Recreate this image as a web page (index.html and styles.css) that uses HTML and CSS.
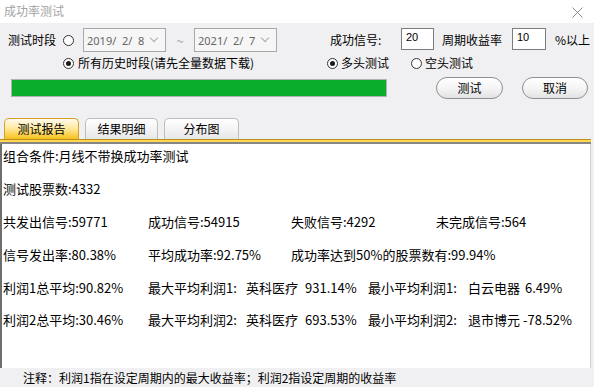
FILE: index.html
```html
<!DOCTYPE html>
<html lang="zh">
<head>
<meta charset="utf-8">
<title>成功率测试</title>
<link rel="stylesheet" href="styles.css">
</head>
<body>
<div class="window">
  <div class="titlebar">
    <span class="title">成功率测试</span>
    <svg class="close" width="11" height="11" viewBox="0 0 11 11"><path d="M0.5 0.5 L10.5 10.5 M10.5 0.5 L0.5 10.5" stroke="#8a8a8a" stroke-width="1" fill="none"/></svg>
  </div>

  <div class="row row1">
    <span class="lbl lbl-period">测试时段</span>
    <span class="radio radio-a"></span>
    <span class="datebox db1"><span class="dt">2019/  2/  8</span><span class="chev"></span></span>
    <span class="tilde">~</span>
    <span class="datebox db2"><span class="dt">2021/  2/  7</span><span class="chev"></span></span>
    <span class="lbl lbl-succ">成功信号:</span>
    <span class="num num1">20</span>
    <span class="lbl lbl-rate">周期收益率</span>
    <span class="num num2">10</span>
    <span class="lbl lbl-pct">%以上</span>
  </div>

  <div class="row row2">
    <span class="radio on radio-b"></span>
    <span class="lbl lbl-all">所有历史时段(请先全量数据下载)</span>
    <span class="radio on radio-c"></span>
    <span class="lbl lbl-long">多头测试</span>
    <span class="radio radio-d"></span>
    <span class="lbl lbl-short">空头测试</span>
  </div>

  <div class="row row3">
    <div class="progress"><div class="fill"></div></div>
    <button class="btn btn-test">测试</button>
    <button class="btn btn-cancel">取消</button>
  </div>

  <div class="tabs">
    <div class="tab active t1">测试报告</div>
    <div class="tab t2">结果明细</div>
    <div class="tab t3">分布图</div>
  </div>
  <div class="tabline"></div>

  <div class="report">
    <div class="line">组合条件:月线不带换成功率测试</div>
    <div class="line">测试股票数:4332</div>
    <div class="line">
      <span class="c1">共发出信号:59771</span><span class="c2">成功信号:54915</span><span class="c3">失败信号:4292</span><span>未完成信号:564</span>
    </div>
    <div class="line">
      <span class="c1">信号发出率:80.38%</span><span class="c2">平均成功率:92.75%</span><span>成功率达到50%的股票数有:99.94%</span>
    </div>
    <div class="line gap">
      <span class="c1">利润1总平均:90.82%</span><span class="p1">最大平均利润1:</span><span class="p2">英科医疗</span><span class="p3">931.14%</span><span class="p4">最小平均利润1:</span><span class="p5">白云电器</span><span class="p6">6.49%</span>
    </div>
    <div class="line">
      <span class="c1">利润2总平均:30.46%</span><span class="p1">最大平均利润2:</span><span class="p2">英科医疗</span><span class="p3">693.53%</span><span class="p4">最小平均利润2:</span><span class="p5">退市博元</span><span class="p6n">-78.52%</span>
    </div>
  </div>

  <div class="footer">注释：利润1指在设定周期内的最大收益率；利润2指设定周期的收益率</div>
</div>
</body>
</html>
```

FILE: styles.css
```css
* { box-sizing: border-box; }
html, body {
  margin: 0;
  padding: 0;
  width: 594px;
  height: 387px;
  overflow: hidden;
  background: #f0f0f2;
  font-family: "Noto Sans CJK SC", "Noto Sans", sans-serif;
  font-size: 12px;
  color: #000;
}
.window {
  width: 594px;
  height: 387px;
  display: flex;
  flex-direction: column;
}
.titlebar {
  height: 23px;
  background: #fff;
  display: flex;
  align-items: center;
  padding-left: 4px;
  flex-shrink: 0;
}
.title {
  color: #a3a3a3;
  font-size: 12px;
  line-height: 14px;
  margin-top: -1px;
}
.close {
  margin-left: auto;
  margin-right: 11px;
  margin-top: 2px;
}

.row {
  display: flex;
  align-items: center;
  flex-shrink: 0;
}
.lbl {
  white-space: nowrap;
  line-height: 16px;
}
.row1 {
  height: 24px;
  margin-top: 5px;
}
.lbl-period { margin-left: 8px; width: 55px; }
.radio {
  width: 11px;
  height: 11px;
  border: 1px solid #333;
  border-radius: 50%;
  background: #fff;
  position: relative;
  flex-shrink: 0;
}
.radio.on::after {
  content: "";
  position: absolute;
  left: 2px;
  top: 2px;
  width: 5px;
  height: 5px;
  border-radius: 50%;
  background: #1a1a1a;
}
.radio-a { margin-right: 9px; }
.datebox {
  width: 83px;
  height: 24px;
  border: 1px solid #a9a9a9;
  background: #f6f6f7;
  display: flex;
  align-items: center;
  padding-left: 3px;
  font-family: "Noto Sans", "Noto Sans CJK SC", sans-serif;
  color: #666;
  font-size: 11px;
}
.dt { white-space: pre; }
.chev {
  margin-left: auto;
  margin-right: 8px;
  width: 6px;
  height: 6px;
  border-right: 1px solid #aaa;
  border-bottom: 1px solid #aaa;
  transform: rotate(45deg);
  margin-top: -4px;
}
.tilde {
  width: 28px;
  text-align: center;
  color: #aaa;
  font-size: 13px;
}
.lbl-succ { margin-left: 53px; width: 71px; }
.num {
  height: 22px;
  border: 1px solid #7c7c7c;
  background: #fff;
  font-family: "Liberation Sans", sans-serif;
  font-size: 11px;
  line-height: 12px;
  padding: 2px 0 0 4px;
  align-self: flex-start;
}
.num1 { width: 33px; }
.lbl-rate { margin-left: 8px; width: 70px; }
.num2 { width: 34px; }
.lbl-pct { margin-left: 9px; }

.row2 {
  height: 16px;
  margin-top: 3px;
}
.radio-b { margin-left: 63px; }
.lbl-all { margin-left: 4px; width: 249px; }
.radio-c { margin-left: 0; }
.lbl-long { margin-left: 3px; width: 70px; }
.lbl-short { margin-left: 3px; }

.row3 {
  height: 22px;
  margin-top: 6px;
}
.progress {
  margin-left: 11px;
  width: 376px;
  height: 18px;
  border: 1px solid #b0b0b0;
  background: #e6e6e6;
}
.fill {
  width: 100%;
  height: 100%;
  background: #0aae2b;
}
.btn {
  height: 22px;
  border: 1px solid #8f8f8f;
  border-radius: 11px;
  background: linear-gradient(#ffffff, #f6f6f6 45%, #e3e3e3);
  font-family: "Noto Sans CJK SC", sans-serif;
  font-size: 12px;
  color: #000;
  padding: 0;
  line-height: 18px;
}
.btn-test { margin-left: 49px; width: 67px; }
.btn-cancel { margin-left: 19px; width: 66px; }

.tabs {
  display: flex;
  align-items: flex-end;
  height: 21px;
  margin-top: 19px;
  padding-left: 4px;
  gap: 6px;
  flex-shrink: 0;
}
.tab {
  height: 21px;
  border: 1px solid #bdbdbd;
  border-bottom: none;
  border-radius: 5px 5px 0 0;
  background: linear-gradient(#ffffff, #f4f4f4 50%, #e6e6e6);
  text-align: center;
  line-height: 20px;
  font-size: 12px;
}
.tab.active {
  border-color: #d7a22a;
  background: linear-gradient(#fffaf0, #ffeaa0 45%, #f6c11d);
}
.t1 { width: 75px; }
.t2 { width: 73px; }
.t3 { width: 75px; }
.tabline {
  width: 591px;
  height: 5px;
  border-top: 1px solid #b9901e;
  background: #ffd64e;
  border-bottom: 2px solid #868686;
  flex-shrink: 0;
}

.report {
  width: 591px;
  height: 224px;
  background: #fff;
  border-left: 2px solid #6e6e6e;
  border-right: 1px solid #d0d0d0;
  padding: 4px 0 0 1px;
  font-size: 13px;
  flex-shrink: 0;
}
.line {
  height: 16px;
  line-height: 16px;
  margin-bottom: 17px;
  white-space: nowrap;
  display: flex;
}
.line.gap { margin-top: 3px; margin-bottom: 16px; }
.line span { display: inline-block; }
.c1 { width: 145px; }
.c2 { width: 143px; }
.c3 { width: 145px; }
.p1 { width: 98px; }
.p2 { width: 59px; }
.p3 { width: 63px; }
.p4 { width: 100px; }
.p5 { width: 54px; }
.p6 { margin-left: 3px; }
.p6n { margin-left: 1px; }

.footer {
  height: 20px;
  line-height: 20px;
  padding-left: 23px;
  font-size: 12px;
  white-space: nowrap;
  flex-shrink: 0;
}
```
